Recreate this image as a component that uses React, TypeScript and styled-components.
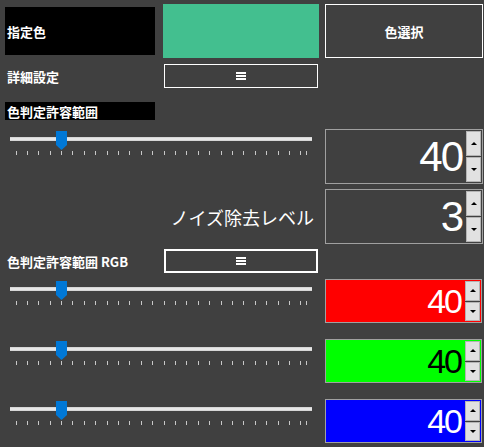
import React from "react";
import styled, { createGlobalStyle } from "styled-components";

const Global = createGlobalStyle`
  html, body { margin: 0; padding: 0; background: #404040; }
  * { box-sizing: border-box; }
`;

const Page = styled.div`
  width: 484px;
  height: 447px;
  background: #404040;
  display: flex;
  flex-direction: column;
  padding-left: 5px;
  font-family: "Noto Sans CJK JP", "Noto Sans", sans-serif;
  color: #fff;
  overflow: hidden;
`;

const Row = styled.div<{ $mt: number; $h: number; $top?: boolean }>`
  display: flex;
  align-items: ${(p) => (p.$top ? "flex-start" : "center")};
  margin-top: ${(p) => p.$mt}px;
  height: ${(p) => p.$h}px;
  flex-shrink: 0;
`;

const BlackLabel = styled.div<{ $h: number }>`
  width: 150px;
  height: ${(p) => p.$h}px;
  background: #000;
  display: flex;
  align-items: center;
  padding-left: 2px;
  font-size: 13px;
  font-weight: bold;
  white-space: nowrap;
`;

const Swatch = styled.div`
  margin-left: 8px;
  width: 156px;
  height: 100%;
  background: #43bf8f;
`;

const PickButton = styled.div`
  margin-left: 6px;
  width: 158px;
  height: 100%;
  border: 1px solid #fff;
  display: flex;
  align-items: center;
  justify-content: center;
  font-size: 13px;
  font-weight: bold;
`;

const Label = styled.div`
  width: 159px;
  padding-left: 2px;
  font-size: 13px;
  font-weight: bold;
  white-space: nowrap;
`;

const MenuButton = styled.div<{ $bw: number }>`
  width: 154px;
  height: 24px;
  border: ${(p) => p.$bw}px solid #fff;
  display: flex;
  align-items: center;
  justify-content: center;
`;

const MenuIcon = styled.div`
  width: 10px;
  height: 8px;
  display: flex;
  flex-direction: column;
  justify-content: space-between;
  & > span {
    display: block;
    height: 2px;
    background: #fff;
  }
`;

const SliderWrap = styled.div`
  width: 320px;
  padding-left: 5px;
  padding-top: 2px;
`;

const SliderBox = styled.div`
  position: relative;
  width: 302px;
  height: 25px;
`;

const Track = styled.div`
  position: absolute;
  left: 0;
  right: 0;
  top: 6px;
  height: 4px;
  background: #e7e7e7;
  border-top: 1px solid #d6d6d6;
  border-bottom: 1px solid #d6d6d6;
`;

const Thumb = styled.div`
  position: absolute;
  top: 0;
  width: 11px;
  height: 19px;
  background: #0078d7;
  clip-path: polygon(0 0, 100% 0, 100% 74%, 50% 100%, 0 74%);
`;

const Tick = styled.div`
  position: absolute;
  top: 20px;
  width: 1px;
  height: 4px;
  background: #c8c8c8;
`;

const SpinBox = styled.div<{ $bg: string; $w: number }>`
  width: ${(p) => p.$w}px;
  height: 100%;
  border: 1px solid #a0a0a0;
  background: ${(p) => p.$bg};
  display: flex;
`;

const SpinValue = styled.div<{ $size: number; $color: string }>`
  flex: 1;
  display: flex;
  align-items: center;
  justify-content: flex-end;
  padding-right: 4px;
  font-family: "Liberation Sans", Arial, sans-serif;
  font-size: ${(p) => p.$size}px;
  letter-spacing: -2px;
  color: ${(p) => p.$color};
  line-height: 1;
`;

const SpinButtons = styled.div`
  width: 15px;
  margin: 1px 1px 1px 0;
  display: flex;
  flex-direction: column;
  gap: 1px;
  background: #404040;
`;

const SpinBtn = styled.div`
  flex: 1;
  background: #e1e1e1;
  border: 1px solid #b4b4b4;
  display: flex;
  align-items: center;
  justify-content: center;
`;

const Tri = styled.div<{ $up: boolean }>`
  width: 0;
  height: 0;
  border-left: 3px solid transparent;
  border-right: 3px solid transparent;
  ${(p) =>
    p.$up ? "border-bottom: 3px solid #000;" : "border-top: 3px solid #000;"}
`;

const NoiseLabel = styled.div`
  width: 320px;
  padding-right: 11px;
  text-align: right;
  font-size: 18px;
  white-space: nowrap;
`;

const MAX = 255;
const SPAN = 290.5;
const OFF = 5.5;
const pos = (v: number) => OFF + (v * SPAN) / MAX;

const Slider: React.FC<{ value: number }> = ({ value }) => {
  const ticks: number[] = [];
  for (let v = 0; v <= 250; v += 10) ticks.push(v);
  ticks.push(255);
  return (
    <SliderWrap>
      <SliderBox>
        <Track />
        {ticks.map((t) => (
          <Tick key={t} style={{ left: Math.round(pos(t)) }} />
        ))}
        <Thumb style={{ left: Math.round(pos(value) - 5.5) }} />
      </SliderBox>
    </SliderWrap>
  );
};

const Spin: React.FC<{
  value: number;
  size: number;
  bg?: string;
  color?: string;
  w?: number;
}> = ({ value, size, bg = "#404040", color = "#fff", w = 158 }) => (
  <SpinBox $bg={bg} $w={w}>
    <SpinValue $size={size} $color={color}>
      {value}
    </SpinValue>
    <SpinButtons>
      <SpinBtn>
        <Tri $up />
      </SpinBtn>
      <SpinBtn>
        <Tri $up={false} />
      </SpinBtn>
    </SpinButtons>
  </SpinBox>
);

const Menu: React.FC<{ bw: number }> = ({ bw }) => (
  <MenuButton $bw={bw}>
    <MenuIcon>
      <span />
      <span />
      <span />
    </MenuIcon>
  </MenuButton>
);

export default function App() {
  return (
    <>
      <Global />
      <Page>
        <Row $mt={4} $h={54}>
          <BlackLabel $h={48}>指定色</BlackLabel>
          <Swatch />
          <PickButton>色選択</PickButton>
        </Row>
        <Row $mt={6} $h={24}>
          <Label>詳細設定</Label>
          <Menu bw={1} />
        </Row>
        <Row $mt={14} $h={18}>
          <BlackLabel $h={18}>色判定許容範囲</BlackLabel>
        </Row>
        <Row $mt={9} $h={55} $top>
          <Slider value={40} />
          <Spin value={40} size={42} />
        </Row>
        <Row $mt={5} $h={55}>
          <NoiseLabel>ノイズ除去レベル</NoiseLabel>
          <Spin value={3} size={42} />
        </Row>
        <Row $mt={5} $h={24}>
          <Label>色判定許容範囲 RGB</Label>
          <Menu bw={2} />
        </Row>
        <Row $mt={6} $h={44} $top>
          <Slider value={40} />
          <Spin value={40} size={34} bg="#ff0000" w={157} />
        </Row>
        <Row $mt={16} $h={44} $top>
          <Slider value={40} />
          <Spin value={40} size={34} bg="#00ff00" color="#000" w={157} />
        </Row>
        <Row $mt={16} $h={44} $top>
          <Slider value={40} />
          <Spin value={40} size={34} bg="#0000ff" w={157} />
        </Row>
      </Page>
    </>
  );
}
